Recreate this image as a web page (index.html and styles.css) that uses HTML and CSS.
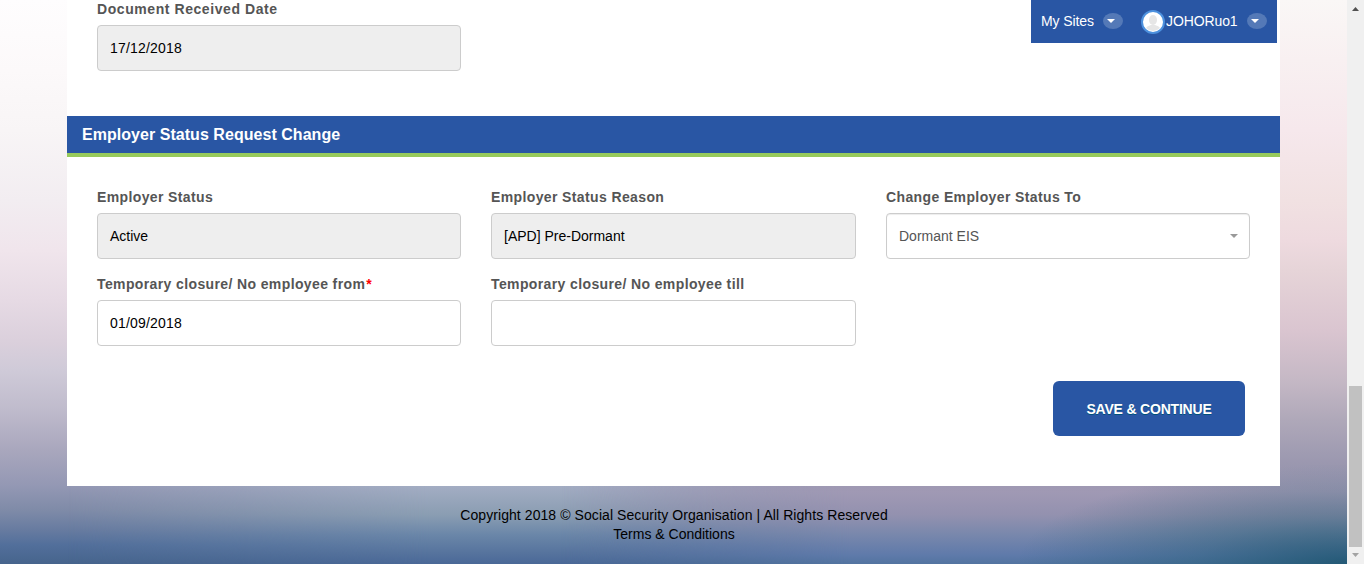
FILE: index.html
```html
<!DOCTYPE html>
<html lang="en">
<head>
<meta charset="utf-8">
<title>Employer Status Request Change</title>
<link rel="stylesheet" href="styles.css">
</head>
<body>
<div class="window">
  <div class="page">
    <main class="sheet">
      <section class="fields fields-top">
        <div class="field">
          <label class="label">Document Received Date</label>
          <div class="control disabled date">17/12/2018</div>
        </div>
      </section>
      <h2 class="section-title">Employer Status Request Change</h2>
      <section class="fields">
        <div class="field">
          <label class="label">Employer Status</label>
          <div class="control disabled">Active</div>
        </div>
        <div class="field">
          <label class="label">Employer Status Reason</label>
          <div class="control disabled">[APD] Pre-Dormant</div>
        </div>
        <div class="field">
          <label class="label">Change Employer Status To</label>
          <div class="control select"><span>Dormant EIS</span><svg class="caret" width="8" height="4" viewBox="0 0 8 4"><path d="M0 0h8L4 4z" fill="#999"/></svg></div>
        </div>
        <div class="field">
          <label class="label">Temporary closure/ No employee from<span class="required">*</span></label>
          <div class="control date">01/09/2018</div>
        </div>
        <div class="field">
          <label class="label">Temporary closure/ No employee till</label>
          <div class="control"></div>
        </div>
      </section>
      <div class="actions"><button class="save">SAVE &amp; CONTINUE</button></div>
    </main>
    <footer class="footer">
      <div class="copyright">Copyright 2018 © Social Security Organisation | All Rights Reserved</div>
      <div class="terms">Terms &amp; Conditions</div>
    </footer>
    <nav class="userbar">
      <span class="sites">My Sites</span>
      <svg class="drop" width="20" height="16" viewBox="0 0 20 16"><ellipse cx="10" cy="8" rx="10" ry="8" fill="#5479b7"/><path d="M4 6h8l-4 4z" fill="#fff"/></svg>
      <svg class="avatar" width="24" height="24" viewBox="0 0 24 24"><circle cx="12" cy="12" r="11" fill="#fff" stroke="#4d91de" stroke-width="2"/><ellipse cx="12" cy="10" rx="4" ry="5" fill="#e6e6e6"/><path d="M5 18q1-2 5-3h4q4 1 5 3-3 3-7 3t-7-3z" fill="#e6e6e6"/></svg>
      <span class="user">JOHORuo1</span>
      <svg class="drop" width="20" height="16" viewBox="0 0 20 16"><ellipse cx="10" cy="8" rx="10" ry="8" fill="#5479b7"/><path d="M4 6h8l-4 4z" fill="#fff"/></svg>
    </nav>
  </div>
  <div class="scrollbar">
    <svg width="7" height="4" viewBox="0 0 7 4"><path d="M0 4L3.500 0 7 4z" fill="#505050"/></svg>
    <div class="thumb"></div>
    <svg width="7" height="4" viewBox="0 0 7 4"><path d="M0 0h7L3.500 4z" fill="#a3a3a3"/></svg>
  </div>
</div>
</body>
</html>
```
FILE: styles.css
```css
* { box-sizing: border-box; }
body {
  margin: 0;
  font-family: "Liberation Sans", Arial, sans-serif;
  font-size: 14px;
  color: #000;
}
.window { display: flex; height: 564px; overflow: hidden; }
.page {
  position: relative;
  width: 1347px;
  padding-left: 67px;
  background: linear-gradient(#fefdfe 0, #fcf9fa 70px, #f8f5f6 130px, #f2edf1 200px, #f0e5ec 250px, #e6dae4 300px, #dbd0dc 340px, #cfcad8 370px, #bfbbcc 410px, #a9a7bd 450px, #9498b4 485px, #7f8ba8 510px, #677ba0 530px, #526f9b 545px, #46648c 564px);
}
/* the backdrop shifts in hue from left to right */
.page::before, .page::after {
  content: "";
  position: absolute;
  inset: 0;
}
.page::before {
  background: linear-gradient(#a3adc3 486px, #8a9db2 515px, #6a86a8 535px, #4a6897 564px);
  mask-image: linear-gradient(90deg, transparent 67px, #000 430px, #000 560px, transparent 850px);
}
.page::after {
  background:
    radial-gradient(ellipse 330px 100px at 100% 100%, rgba(10, 75, 95, .65), rgba(20, 85, 105, .35) 45%, transparent),
    linear-gradient(#faf7f6 0, #f8f0f1 60px, #f6e8ec 130px, #f1e1e2 200px, #eedadf 240px, #e6d4d8 270px, #dac5d0 330px, #c5b8c5 380px, #afa8b9 420px, #9a97af 465px, #a099b4 492px, #9391af 515px, #7887ac 535px, #5f7aaa 555px, #5274a0 564px);
  mask-image: linear-gradient(90deg, transparent 560px, #000 850px);
}
.sheet {
  position: relative;
  z-index: 1;
  width: 1213px;
  height: 486px;
  background: #fff;
}
.fields {
  display: grid;
  grid-template-columns: 364px 365px 364px;
  column-gap: 30px;
  row-gap: 11px;
  padding: 26px 30px 0;
}
.fields-top { height: 116px; padding-top: 0; }
.field { height: 76px; padding-top: 4px; }
.fields-top .field { height: 71px; padding-top: 0; }
.label {
  display: block;
  height: 26px;
  line-height: 20px;
  font-size: 14px;
  font-weight: bold;
  letter-spacing: .38px;
  color: #555;
  white-space: nowrap;
}
.fields-top .label { height: 25px; line-height: 18px; letter-spacing: .57px; }
.required { color: #f00; margin-left: 1px; }
.control {
  display: flex;
  align-items: center;
  height: 46px;
  padding: 0 12px;
  border: 1px solid #ccc;
  border-radius: 4px;
  background: #fff;
}
.disabled { background: #eee; }
.date { letter-spacing: .2px; }
.select { justify-content: space-between; padding-right: 11px; color: #555; box-shadow: inset 0 1px 1px rgba(0, 0, 0, .075); }
.section-title {
  height: 41px;
  margin: 0;
  padding-left: 15px;
  border-bottom: 4px solid #97ca5c;
  background: #2956a4;
  color: #fff;
  font-size: 16px;
  letter-spacing: .04px;
  line-height: 37px;
}
.actions { display: flex; justify-content: flex-end; padding: 35px 35px 0 0; }
.save {
  width: 192px;
  height: 55px;
  padding: 0;
  border: 0;
  border-radius: 6px;
  background: #2956a4;
  color: #fff;
  font: bold 14px "Liberation Sans", Arial, sans-serif;
  letter-spacing: -.2px;
  text-shadow: 0 1px 0 #00507a;
}
.footer {
  position: relative;
  z-index: 1;
  width: 1214px;
  padding-top: 20px;
  line-height: 19px;
  text-align: center;
}
.copyright { letter-spacing: .075px; }
.userbar {
  position: absolute;
  z-index: 2;
  top: 0;
  left: 1031px;
  display: flex;
  align-items: center;
  width: 246px;
  height: 43px;
  padding-left: 10px;
  background: #2956a4;
  color: #fff;
  line-height: 18px;
}
.sites, .user { padding-bottom: 1px; white-space: nowrap; }
.sites { width: 62px; letter-spacing: -.1px; }
.drop { margin-bottom: 1px; }
.avatar { margin-left: 18px; }
.user { width: 81px; margin-left: 1px; letter-spacing: -.1px; }
.scrollbar {
  display: flex;
  flex-direction: column;
  align-items: center;
  width: 17px;
  padding-top: 7px;
  background: #f0f0f0;
}
.thumb { width: 13px; height: 161px; margin: 375px 0 6px; background: #c1c1c1; }
```
